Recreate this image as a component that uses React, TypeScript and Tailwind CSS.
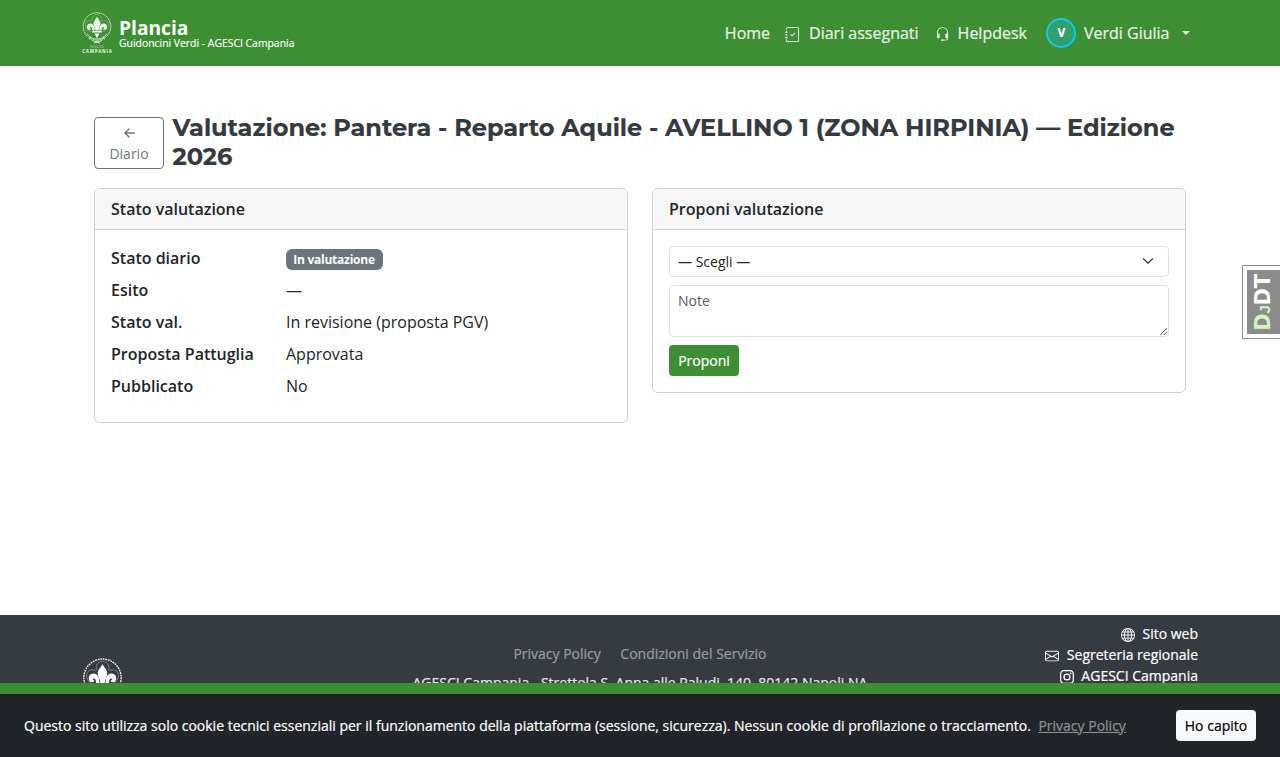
import type { ReactNode } from "react";
import {
  BsChevronDown,
  BsEnvelope,
  BsGlobe,
  BsHeadset,
  BsInstagram,
  BsJournalCheck,
} from "react-icons/bs";

const statusRows: { label: string; value: ReactNode }[] = [
  {
    label: "Stato diario",
    value: (
      <span className="mt-[3px] block h-[21px] w-[97px] rounded-md bg-[#6c757d] pr-px text-center text-xs leading-[21px] font-bold tracking-[-0.24px] text-white">
        In valutazione
      </span>
    ),
  },
  { label: "Esito", value: "—" },
  { label: "Stato val.", value: "In revisione (proposta PGV)" },
  { label: "Proposta Pattuglia", value: "Approvata" },
  { label: "Pubblicato", value: "No" },
];

function Emblem({ className }: { className: string }) {
  return (
    <svg viewBox="0 0 60 84" fill="none" className={className}>
      <circle cx="30" cy="29" r="27.5" stroke="currentColor" strokeWidth="2" strokeDasharray="2.6 1.2" />
      {/* trefoil outline */}
      <path
        d="M21 18C19 9 25 5 30 5s11 4 9 13M20 19C11 14 5 21 7 29s8 10 12 10M40 19c9-5 15 2 13 10s-8 10-12 10"
        stroke="currentColor"
        strokeWidth="1"
        opacity=".5"
      />
      {/* lily */}
      <g fill="currentColor">
        <path d="M30 9c2 5 7 8 7 14 0 5-3 8-4 14h-6c-1-6-4-9-4-14 0-6 5-9 7-14Z" />
        <path d="M25.500 37c0-8-3-14-8.500-14-6 0-8 5-7 9s6 5 8 2l-2.500-3c2-2 5-1 5 6h5Z" />
        <path d="M34.500 37c0-8 3-14 8.500-14 6 0 8 5 7 9s-6 5-8 2l2.500-3c-2-2-5-1-5 6h-5Z" />
        <rect x="20" y="38" width="20" height="3" rx="1" />
        <path d="M25 43h10l-3 6-2 4-2-4Z" />
      </g>
      <path d="M10 43c5 8 12 11 20 11s15-3 20-11M18 49l-3 6M42 49l3 6" stroke="currentColor" strokeWidth="2" opacity=".75" />
      <path d="M20 56c4 5 8 2 10 6 2-4 6-1 10-6M24 63l6-5 6 5" stroke="currentColor" strokeWidth="2" opacity=".85" />
      <text x="30" y="72" textAnchor="middle" fontSize="7" fill="currentColor" opacity=".5" textLength="28">
        REGIONE
      </text>
      <text x="30" y="82" textAnchor="middle" fontSize="9" fontWeight="700" fill="currentColor" textLength="59">
        CAMPANIA
      </text>
    </svg>
  );
}

function Header() {
  return (
    <header className="h-[66px] shrink-0 bg-[#3e8f33]">
      <div className="mx-auto flex h-full max-w-[1140px] items-center px-3">
        <Emblem className="-ml-[0.5px] h-[42px] w-[30px] text-white/90" />
        <div className="ml-[7.5px] text-white">
          <div className="pt-px text-[19.2px] leading-[20px] font-bold">Plancia</div>
          <div className="text-[10.4px] leading-[11px] [-webkit-text-stroke:0.15px]">
            Guidoncini Verdi - AGESCI Campania
          </div>
        </div>
        <nav className="ml-auto flex items-center text-base text-white/85 [-webkit-text-stroke:0.2px]">
          <a>Home</a>
          <a className="ml-[15px] flex items-center">
            <BsJournalCheck className="mt-[3px] mr-[9px] size-[15px]" />
            Diari assegnati
          </a>
          <a className="ml-4 flex items-center">
            <BsHeadset className="mt-[2px] mr-2 size-[15px]" />
            Helpdesk
          </a>
          <a className="ml-[19px] flex items-center">
            <span className="mr-2 flex size-[30px] items-center justify-center rounded-full border-2 border-[#0dcaf0] bg-[#2f9f6b] pl-px text-xs font-bold text-white">
              V
            </span>
            Verdi Giulia
            <span className="mr-2 ml-[12.5px] border-x-4 border-t-4 border-x-transparent border-t-white/85" />
          </a>
        </nav>
      </div>
    </header>
  );
}

function Card({ title, children }: { title: string; children: ReactNode }) {
  return (
    <section className="overflow-hidden rounded-md border border-[#d0d1d2] bg-white">
      <h2 className="h-[41px] border-b border-[#d0d1d2] bg-[#f7f7f7] px-4 pt-2 text-base leading-6 font-semibold">
        {title}
      </h2>
      <div className="p-4">{children}</div>
    </section>
  );
}

function Footer() {
  return (
    <footer className="h-[142px] shrink-0 overflow-hidden bg-[#363a41] text-sm text-white [-webkit-text-stroke:0.2px]">
      <div className="mx-auto flex max-w-[1140px] items-start px-3">
        <Emblem className="mt-[43px] h-[57px] w-[41px]" />
        <div className="flex-1 pt-[28px] pl-[112px] text-center leading-[21px]">
          <div className="flex justify-center gap-[19.5px] text-[#9b9da0]">
            <a>Privacy Policy</a>
            <a>Condizioni del Servizio</a>
          </div>
          <p className="mt-2 whitespace-nowrap text-white/85">
            AGESCI Campania - Strettola S. Anna alle Paludi, 140, 80142 Napoli NA
          </p>
        </div>
        <div className="flex flex-col items-end pt-[8px] leading-[21px]">
          <a className="flex items-center">
            <BsGlobe className="mt-[2px] mr-[7px] size-[14px]" />
            Sito web
          </a>
          <a className="flex items-center">
            <BsEnvelope className="mt-[2px] mr-[8px] size-[14px]" />
            Segreteria regionale
          </a>
          <a className="flex items-center">
            <BsInstagram className="mt-[2px] mr-[7px] size-[14px]" />
            AGESCI Campania
          </a>
        </div>
      </div>
    </footer>
  );
}

function CookieBanner() {
  return (
    <div className="fixed inset-x-0 bottom-0 flex h-[74px] items-center border-t-[11px] border-[#3e8f33] bg-[#212529] px-6 text-sm text-white [-webkit-text-stroke:0.2px]">
      <span>
        Questo sito utilizza solo cookie tecnici essenziali per il funzionamento della piattaforma (sessione,
        sicurezza). Nessun cookie di profilazione o tracciamento.
      </span>
      <a className="ml-[7.5px] text-[#909294] underline">Privacy Policy</a>
      <button className="ml-auto h-[31px] w-20 rounded bg-[#f8f9fa] text-sm text-black">Ho capito</button>
    </div>
  );
}

function DebugHandle() {
  return (
    <div className="fixed top-[265px] right-0 h-[74px] w-[38px] border border-r-0 border-[#8c8c8c] bg-white py-1 pl-1">
      <div className="flex h-full items-center justify-center bg-[#8c8c8c]">
        <span className="-rotate-90 font-['DejaVu_Sans'] text-[21px] leading-none font-bold tracking-[-0.3px] whitespace-nowrap text-white">
          <span className="text-[#d9f5bb]">
            D<span className="font-['Liberation_Sans'] text-[15px]">J</span>
          </span>
          DT
        </span>
      </div>
    </div>
  );
}

export default function App() {
  return (
    <div className="flex h-screen flex-col overflow-hidden bg-white font-['Open_Sans',sans-serif] text-[#212529]">
      <Header />
      <main className="mx-auto w-full max-w-[1140px] flex-1 px-6 pt-[47px]">
        <div className="flex items-center">
          <a className="mt-px mr-[8.5px] -mb-px flex h-[52px] w-[70px] shrink-0 flex-col items-center rounded border border-[#6c757d] pt-[5px] text-sm leading-[21px] text-[#6c757d]">
            <svg viewBox="0 0 11 10" className="mt-[5px] mb-[5px] h-[10px] w-[11px] shrink-0" fill="none" stroke="currentColor" strokeWidth="1.4">
              <path d="M10.500 5H1.200M5 1 1 5l4 4" strokeLinecap="round" strokeLinejoin="round" />
            </svg>
            Diario
          </a>
          <h1 className="font-['Montserrat',sans-serif] text-2xl leading-[29px] font-bold text-[#343a40] [-webkit-text-stroke:0.2px]">
            Valutazione: Pantera - Reparto Aquile - AVELLINO 1 (ZONA HIRPINIA) — Edizione 2026
          </h1>
        </div>
        <div className="mt-[17px] grid grid-cols-2 items-start gap-6">
          <Card title="Stato valutazione">
            <dl className="grid grid-cols-[175px_1fr]">
              {statusRows.map((row) => (
                <div key={row.label} className="contents">
                  <dt className="h-8 leading-6 font-semibold">{row.label}</dt>
                  <dd className="h-8 leading-6">{row.value}</dd>
                </div>
              ))}
            </dl>
          </Card>
          <Card title="Proponi valutazione">
            <form className="flex flex-col items-start gap-2 text-sm">
              <div className="relative w-full">
                <select className="block h-[31px] w-full appearance-none rounded border border-[#dee2e6] bg-white px-2">
                  <option>— Scegli —</option>
                </select>
                <BsChevronDown
                  className="pointer-events-none absolute top-[9px] right-[15px] size-3 [stroke-width:0.8px]"
                  stroke="currentColor"
                />
              </div>
              <textarea
                placeholder="Note"
                className="block h-[52px] w-full rounded border border-[#dee2e6] px-2 py-1 leading-[21px] placeholder:text-[#595c5f]"
              />
              <button
                type="button"
                className="h-[31px] w-[70px] rounded bg-[#3e8f33] text-white [-webkit-text-stroke:0.2px]"
              >
                Proponi
              </button>
            </form>
          </Card>
        </div>
      </main>
      <Footer />
      <CookieBanner />
      <DebugHandle />
    </div>
  );
}
